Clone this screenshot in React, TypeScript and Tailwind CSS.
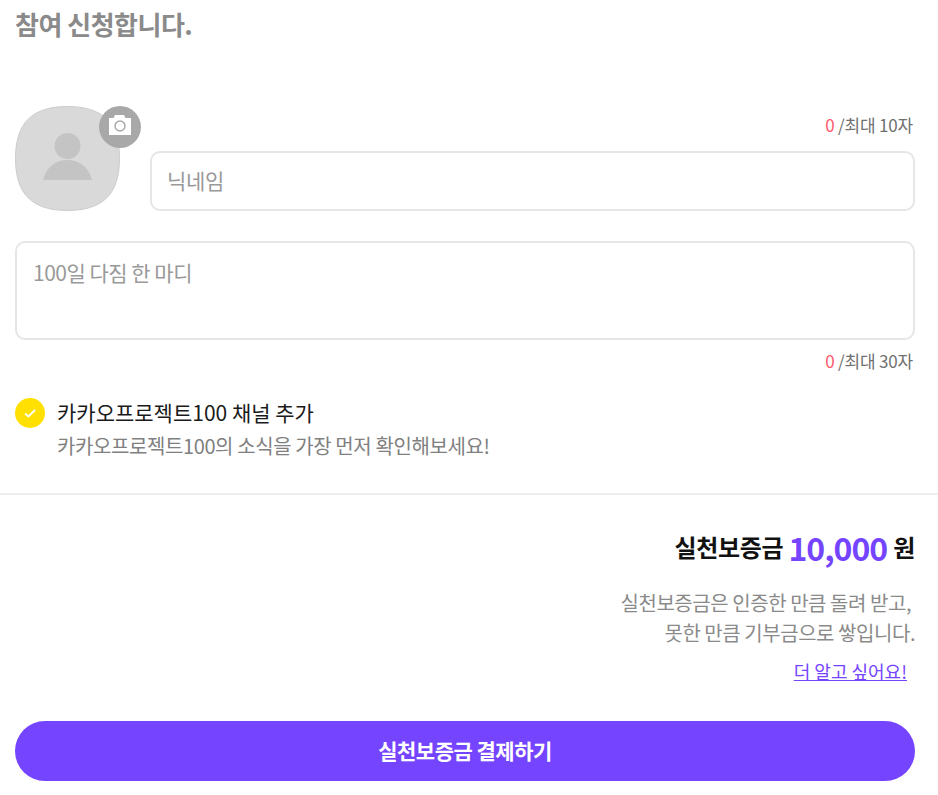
function Avatar() {
  return (
    <div className="relative w-[105px] h-[105px] shrink-0">
      <svg viewBox="0 0 105 105" className="w-[105px] h-[105px]">
        <path
          d="M52.5 .5C88 .5 104.500 17 104.500 52.500S88 104.500 52.500 104.500 .5 88 .5 52.500 17 .5 52.500 .5Z"
          fill="#d9d9d9"
          stroke="#cccccc"
        />
        <circle cx="52.500" cy="40" r="13" fill="#c4c4c4" />
        <path d="M28 74c3-13 13-20 24.500-20S74 61 77 74Z" fill="#c4c4c4" />
      </svg>
      <div className="absolute left-[84px] top-0 w-[42px] h-[42px] rounded-full bg-[#a8a8a8] flex items-center justify-center">
        <svg viewBox="0 0 22 20" className="w-[22px] h-[20px] mb-[4px]">
          <path d="M0 3h4.500L6 0h9l1.500 3H22v17H0Z" fill="#ffffff" />
          <circle cx="11" cy="11" r="5" fill="none" stroke="#a8a8a8" strokeWidth="1.500" />
        </svg>
      </div>
    </div>
  );
}

export default function App() {
  return (
    <div className="w-[938px] h-[795px] bg-white pl-[15px] pr-[23px] font-['Noto_Sans_CJK_KR',sans-serif] overflow-hidden">
      <h1 className="text-[26px] leading-[36px] pt-[6px] font-bold text-[#8a8a8a] tracking-[-0.5px]">참여 신청합니다.</h1>

      <div className="flex gap-[30px] mt-[64px]">
        <Avatar />
        <div className="flex-1">
          <div className="text-right text-[17px] leading-[24px] pt-[7px] pr-[2px] text-[#707070] tracking-[-0.2px]">
            <span className="text-[#ff5a6e]">0</span> /최대 10자
          </div>
          <div className="mt-[14px] h-[60px] border-2 border-[#e6e6e6] rounded-[10px] flex items-center px-[15px] text-[21px] text-[#999999] tracking-[-0.3px]">
            닉네임
          </div>
        </div>
      </div>

      <div className="mt-[30px] h-[99px] border-2 border-[#e6e6e6] rounded-[10px] px-[16px] pt-[14px] text-[21px] leading-[30px] text-[#999999] tracking-[-0.5px]">
        100일 다짐 한 마디
      </div>
      <div className="text-right text-[17px] leading-[24px] mt-[9px] pr-[2px] text-[#707070] tracking-[-0.2px]">
        <span className="text-[#ff5a6e]">0</span> /최대 30자
      </div>

      <div className="flex gap-[12px] mt-[24px]">
        <div className="w-[30px] h-[30px] rounded-full bg-[#ffe000] flex items-center justify-center mt-[1px]">
          <svg viewBox="0 0 12 9" className="w-[12px] h-[9px]">
            <path d="M1 4.500l3.500 3L11 1" fill="none" stroke="#ffffff" strokeWidth="1.800" />
          </svg>
        </div>
        <div>
          <div className="text-[21px] leading-[30px] text-[#1a1a1a]">카카오프로젝트100 채널 추가</div>
          <div className="text-[20px] leading-[30px] mt-[4px] text-[#808080] tracking-[-0.4px]">
            카카오프로젝트100의 소식을 가장 먼저 확인해보세요!
          </div>
        </div>
      </div>

      <div className="h-[2px] bg-[#eeeeee] -ml-[15px] -mr-[23px] mt-[32px]" />

      <div className="flex items-center justify-end mt-[30px] h-[44px] font-bold text-[24px] text-[#111111] tracking-[-0.3px]">
        실천보증금<span className="text-[32px] text-[#7444ff] ml-[5px] mr-[6px] tracking-[-1px]">10,000</span>원
      </div>
      <div className="text-right text-[20px] leading-[30px] mt-[19px] text-[#8a8a8a] tracking-[-0.45px]">
        <div className="pr-[4px]">실천보증금은 인증한 만큼 돌려 받고,</div>
        <div>못한 만큼 기부금으로 쌓입니다.</div>
      </div>
      <div className="text-right mt-[9px] pr-[8px] text-[18px] leading-[28px] text-[#7444ff] underline">더 알고 싶어요!</div>

      <div className="mt-[36px] h-[60px] rounded-full bg-[#7444ff] flex items-center justify-center text-white font-bold text-[21px] tracking-[-0.5px]">
        실천보증금 결제하기
      </div>
    </div>
  );
}
